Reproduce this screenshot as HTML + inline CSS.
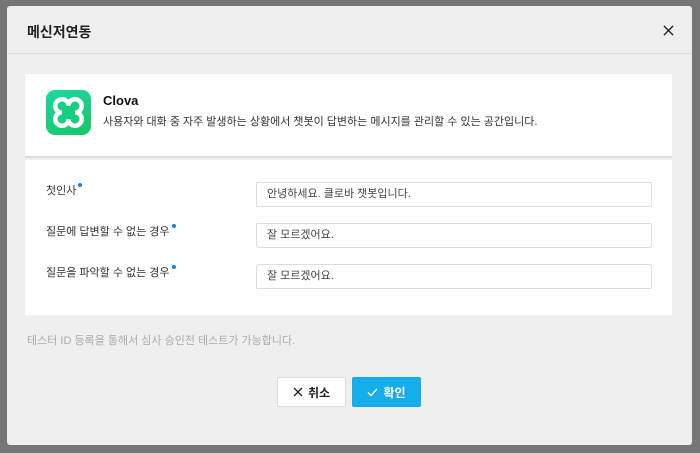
<!DOCTYPE html><html><head><meta charset="utf-8"><style>
*{box-sizing:border-box;margin:0;padding:0}
body{width:700px;height:453px;background:#767676;font-family:"Liberation Sans","Noto Sans CJK KR",sans-serif;position:relative;overflow:hidden}
.m{position:absolute;left:7px;top:6px;width:685px;height:439px;background:#efefef;border-radius:3px}
.h{height:48px;border-bottom:1px solid #dcdcdc;padding:16px 0 0 20px;font-size:14px;font-weight:bold;color:#222}
.x{position:absolute;right:18px;top:19px}
.card{position:absolute;left:18px;width:647px;background:#fff}
.c1{top:68px;height:84px;border-bottom:2px solid #ddd}
.logo{position:absolute;left:21px;top:16px;width:45px;height:45px;border-radius:9px;background:linear-gradient(160deg,#1fd6a0,#14c866)}
.t{position:absolute;left:78px;top:19px;font-size:13px;font-weight:bold;color:#111}
.d{position:absolute;left:78px;top:39px;font-size:11px;color:#333}
.c2{top:154px;height:155px}
.l{position:absolute;left:21px;font-size:11px;color:#333}
.l i{display:inline-block;width:4px;height:4px;border-radius:50%;background:#1a7fe0;vertical-align:top;margin:1px 0 0 2px}
.in{position:absolute;left:231px;width:396px;height:25px;border:1px solid #ddd;border-radius:2px;font-size:11px;color:#444;padding:2px 0 0 10px}
.n{position:absolute;left:20px;top:326px;font-size:11px;color:#aaa}
.b{position:absolute;top:371px;height:30px;width:69px;font-size:12px;font-weight:bold;display:flex;align-items:center;justify-content:center;gap:5px;border-radius:2px}
</style></head><body><div class="m">
<div class="h">메신저연동</div>
<svg class="x" width="11" height="11" viewBox="0 0 12 12"><path d="M1 1L11 11M11 1L1 11" stroke="#222" stroke-width="1.5"/></svg>
<div class="card c1"><div class="logo"><svg width="45" height="45" viewBox="0 0 45 45">
<g fill="#fff"><circle cx="16" cy="16" r="9"/><circle cx="29" cy="16" r="9"/><circle cx="16" cy="29" r="9"/><circle cx="29" cy="29" r="9"/></g>
<g fill="#17cf80"><circle cx="16" cy="16" r="4.5"/><circle cx="29" cy="16" r="4.5"/><circle cx="16" cy="29" r="4.5"/><circle cx="29" cy="29" r="4.5"/><rect x="16" y="16" width="13" height="13"/></g>
</svg></div>
<div class="t">Clova</div><div class="d">사용자와 대화 중 자주 발생하는 상황에서 챗봇이 답변하는 메시지를 관리할 수 있는 공간입니다.</div></div>
<div class="card c2">
<div class="l" style="top:22px">첫인사<i></i></div><div class="in" style="top:22px">안녕하세요. 클로바 챗봇입니다.</div>
<div class="l" style="top:63px">질문에 답변할 수 없는 경우<i></i></div><div class="in" style="top:63px">잘 모르겠어요.</div>
<div class="l" style="top:104px">질문을 파악할 수 없는 경우<i></i></div><div class="in" style="top:104px">잘 모르겠어요.</div>
</div>
<div class="n">테스터 ID 등록을 통해서 심사 승인전 테스트가 가능합니다.</div>
<div class="b" style="left:270px;background:#fff;border:1px solid #ddd;color:#222"><svg width="10" height="10" viewBox="0 0 10 10"><path d="M1 1L9 9M9 1L1 9" stroke="#222" stroke-width="1.3"/></svg>취소</div>
<div class="b" style="left:345px;background:#16aeea;color:#fff"><svg width="11" height="9" viewBox="0 0 11 9"><path d="M1 4.5L4 7.5 10 1" stroke="#fff" stroke-width="1.3" fill="none"/></svg>확인</div>
</div></body></html>
